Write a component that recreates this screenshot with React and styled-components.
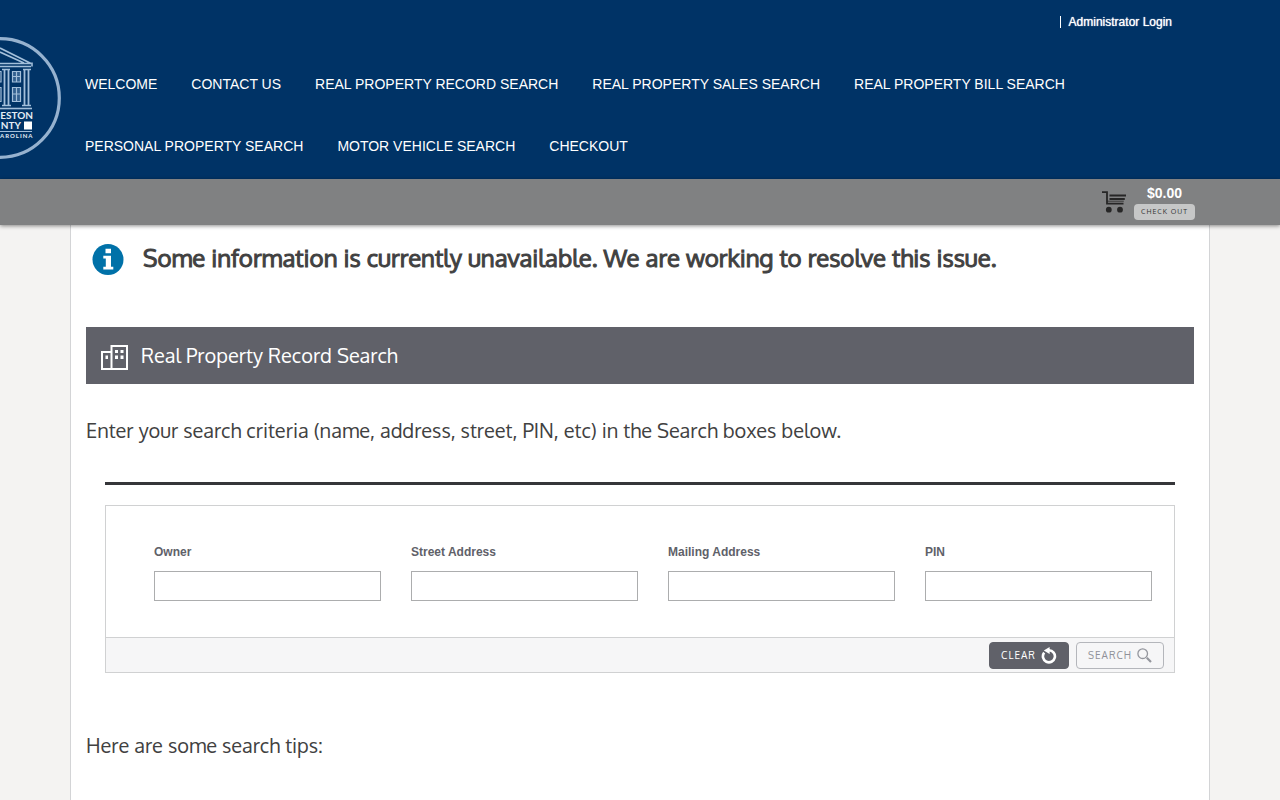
import React from "react";
import styled, { createGlobalStyle } from "styled-components";

const heading = `"Oxygen", "Noto Sans", sans-serif`;

const GlobalStyle = createGlobalStyle`
  *, *::before, *::after { box-sizing: border-box; }
  body {
    margin: 0;
    background: #f4f3f2;
    color: #414141;
    font-family: "Liberation Sans", Arial, sans-serif;
    font-size: 12px;
  }
  h1, h2, p { margin: 0; }
`;

const Shell = styled.div`
  display: flex;
  flex-direction: column;
  min-height: 100vh;
`;

const Header = styled.header`
  background: #003366;
  color: #fff;
  padding-bottom: 2px;
`;

const TopBar = styled.div`
  display: flex;
  justify-content: flex-end;
  height: 37px;
  padding: 16px 108px 0 0;
`;

const LoginLink = styled.a`
  height: 12px;
  padding-left: 8px;
  border-left: 1px solid #fff;
  color: #fff;
  font-size: 12px;
  line-height: 12px;
  text-decoration: none;
  text-shadow: 0 0 1px #fff;
`;

const HeaderRow = styled.div`
  display: flex;
  align-items: flex-start;
`;

const Logo = styled.svg`
  flex: none;
  display: block;
  width: 62px;
  height: 124px;
`;

const Nav = styled.nav`
  display: flex;
  flex-wrap: wrap;
  column-gap: 34px;
  flex: 1;
  padding: 16px 85px 0 23px;
`;

const NavLink = styled.a`
  color: #fff;
  font-size: 14px;
  line-height: 62px;
  text-decoration: none;
  white-space: nowrap;
`;

const CartBar = styled.div`
  position: relative;
  display: flex;
  justify-content: flex-end;
  align-items: center;
  gap: 8px;
  height: 46px;
  padding-right: 85px;
  background: #808182;
  box-shadow: 0 1px 4px rgba(0, 0, 0, 0.45);
`;

const CartInfo = styled.div`
  display: flex;
  flex-direction: column;
  align-items: center;
  gap: 3px;
`;

const Total = styled.strong`
  color: #fff;
  font-size: 14px;
  line-height: 16px;
`;

const CheckoutButton = styled.button`
  width: 61px;
  height: 16px;
  padding: 0;
  border: 0;
  border-radius: 4px;
  background: #c6c7c7;
  color: #333;
  font: 7px/16px ${heading};
  letter-spacing: 1px;
  white-space: nowrap;
`;

const Page = styled.main`
  flex: 1;
  margin: 0 70px;
  padding: 0 15px;
  background: #fff;
  border: solid #d3d4d6;
  border-width: 0 1px;
`;

const Notice = styled.div`
  display: flex;
  align-items: center;
  gap: 19px;
  height: 102px;
  padding: 0 6px 34px;
`;

const NoticeText = styled.h1`
  font: 400 24px/32px ${heading};
  -webkit-text-stroke: 1px currentColor;
  padding-bottom: 2px;
`;

const TitleBar = styled.div`
  display: flex;
  align-items: center;
  gap: 13px;
  height: 57px;
  padding: 0 15px;
  background: #606169;
  color: #fff;

  svg {
    margin-top: 3px;
  }
`;

const Title = styled.h2`
  padding-bottom: 2px;
  font: 400 20px/28px ${heading};
`;

const Lead = styled.p`
  margin-top: ${(p) => p.$space}px;
  font: 400 20px/30px ${heading};
`;

const SearchArea = styled.section`
  margin: 37px 19px 0;
  padding-top: 20px;
  border-top: 3px solid #353639;
`;

const SearchForm = styled.form`
  border: 1px solid #d0d1d2;
`;

const Fields = styled.div`
  display: grid;
  grid-template-columns: repeat(4, 1fr);
  gap: 30px;
  padding: 38px 22px 36px 48px;
`;

const Field = styled.label`
  display: flex;
  flex-direction: column;
  gap: 11px;
  color: #606169;
  font-size: 12px;
  font-weight: 700;
  line-height: 16px;
`;

const TextInput = styled.input`
  width: 100%;
  height: 30px;
  padding: 0 8px;
  border: 1px solid #acadae;
  border-radius: 0;
  background: #fff;
`;

const Actions = styled.div`
  display: flex;
  justify-content: flex-end;
  gap: 7px;
  padding: 4px 10px 3px;
  border-top: 1px solid #d0d1d2;
  background: #f6f6f7;
`;

const ActionButton = styled.button`
  display: flex;
  align-items: center;
  justify-content: center;
  gap: 5px;
  width: ${(p) => (p.$primary ? 80 : 88)}px;
  height: 27px;
  padding: 0 0 1px;
  border: 1px solid ${(p) => (p.$primary ? "#606169" : "#b4b6bb")};
  border-radius: 4px;
  background: ${(p) => (p.$primary ? "#606169" : "#f6f6f7")};
  color: ${(p) => (p.$primary ? "#fff" : "#8f9199")};
  font: 10px/16px ${heading};
  letter-spacing: 1px;
`;

const links = [
  "WELCOME",
  "CONTACT US",
  "REAL PROPERTY RECORD SEARCH",
  "REAL PROPERTY SALES SEARCH",
  "REAL PROPERTY BILL SEARCH",
  "PERSONAL PROPERTY SEARCH",
  "MOTOR VEHICLE SEARCH",
  "CHECKOUT",
];

const fields = ["Owner", "Street Address", "Mailing Address", "PIN"];

function CountyLogo() {
  return (
    <Logo viewBox="0 0 62 124" aria-label="County seal" role="img">
      <circle cx="0" cy="61" r="59.3" fill="none" stroke="#96b2cf" strokeWidth="3.2" />
      <path d="M12 34H21V45H12ZM12 50H21V65H12Z" fill="#33608f" />
      <g fill="none" stroke="#a3bfda">
        <path d="M0 11L31 26.5H0M0 15L24 26M0 29.5H31M32 25.5V29.5" strokeWidth="1.6" />
        <path d="M2 32.5H10M23 32.5H31" strokeWidth="1.4" />
        <path d="M4.5 33V68M8.5 33V68M24.5 33V68M28.5 33V68" strokeWidth="1.8" />
        <path d="M2 68.5H11M22 68.5H31" strokeWidth="1.4" />
        <path d="M12.5 34.5H20.5V45H12.5ZM16.5 34.5V45M12.5 39.5H20.5" strokeWidth="1.2" />
        <path d="M12.5 50.5H20.5V64.5H12.5ZM16.5 50.5V64.5M12.5 57H20.5" strokeWidth="1.2" />
        <path d="M0 34.5H1V45H0M0 50.5H1V64.5H0" strokeWidth="1.2" />
        <path d="M0 71.5H32" strokeWidth="1.6" />
        <path d="M0 94.5H32" strokeWidth="1" />
      </g>
      <g fill="#e4edf5" fontFamily="Lato, sans-serif">
        <text x="33" y="82" fontSize="10" fontWeight="700" textAnchor="end">ESTON</text>
        <text x="21" y="92" fontSize="10" fontWeight="700" textAnchor="end">NTY</text>
        <text x="0" y="101" fontSize="6" fontWeight="700" letterSpacing="1">AROLINA</text>
      </g>
      <path d="M24 84.5H32V92.5H24Z" fill="#fff" />
    </Logo>
  );
}

function CartIcon() {
  return (
    <svg width="24" height="22" viewBox="0 0 24 22" aria-hidden="true">
      <path d="M0 1.2H5V12.6H21.5M7.5 4.5H24M7.5 8H22.8" fill="none" stroke="#262626" strokeWidth="1.8" />
      <path d="M5 10.2H21.8" fill="none" stroke="#262626" strokeWidth="0.8" />
      <circle cx="6.8" cy="18.7" r="2.9" fill="#262626" />
      <circle cx="18" cy="18.7" r="2.9" fill="#262626" />
    </svg>
  );
}

function InfoIcon() {
  return (
    <svg width="32" height="32" viewBox="0 0 32 32" aria-hidden="true">
      <circle cx="16" cy="16.5" r="15.5" fill="#0071a8" />
      <path d="M13.5 5.8H19V10.3H13.5ZM11.3 12.8H19V23.8H21.3V26.5H11.3V23.8H13.8V15.5H11.3Z" fill="#fff" />
    </svg>
  );
}

function BuildingIcon() {
  return (
    <svg width="27" height="25" viewBox="0 0 27 25" aria-hidden="true">
      <path d="M10.5 7H1V24H26V1H10.5V24" fill="none" stroke="#fff" strokeWidth="2" />
      <path d="M14 5H17V8H14ZM19.5 5H22.5V8H19.5ZM14 10.5H17V14H14ZM19.5 10.5H22.5V14H19.5ZM4.5 10.5H7V14H4.5Z" fill="#fff" />
    </svg>
  );
}

function ResetIcon() {
  return (
    <svg width="16" height="17" viewBox="0 0 16 17" aria-hidden="true">
      <path d="M3.2 5.6A6 6 0 1 0 8 3.3" fill="none" stroke="#fff" strokeWidth="2.6" />
      <path d="M2.8 3.5L8.6 0V7Z" fill="#fff" />
    </svg>
  );
}

function SearchIcon() {
  return (
    <svg width="15" height="15" viewBox="0 0 15 15" aria-hidden="true">
      <circle cx="5.7" cy="5.7" r="4.8" fill="none" stroke="#94969d" strokeWidth="1.3" />
      <path d="M9.8 9.8L14 14" stroke="#94969d" strokeWidth="2.2" />
    </svg>
  );
}

export default function App() {
  return (
    <Shell>
      <GlobalStyle />
      <Header>
        <TopBar>
          <LoginLink href="#login">Administrator Login</LoginLink>
        </TopBar>
        <HeaderRow>
          <CountyLogo />
          <Nav>
            {links.map((label) => (
              <NavLink href="#nav" key={label}>{label}</NavLink>
            ))}
          </Nav>
        </HeaderRow>
      </Header>
      <CartBar>
        <CartIcon />
        <CartInfo>
          <Total>$0.00</Total>
          <CheckoutButton type="button">CHECK OUT</CheckoutButton>
        </CartInfo>
      </CartBar>
      <Page>
        <Notice>
          <InfoIcon />
          <NoticeText>
            Some information is currently unavailable. We are working to resolve this issue.
          </NoticeText>
        </Notice>
        <TitleBar>
          <BuildingIcon />
          <Title>Real Property Record Search</Title>
        </TitleBar>
        <Lead $space={31}>
          Enter your search criteria (name, address, street, PIN, etc) in the Search boxes below.
        </Lead>
        <SearchArea>
          <SearchForm onSubmit={(event) => event.preventDefault()}>
            <Fields>
              {fields.map((label) => (
                <Field key={label}>
                  {label}
                  <TextInput type="text" />
                </Field>
              ))}
            </Fields>
            <Actions>
              <ActionButton type="reset" $primary>CLEAR<ResetIcon /></ActionButton>
              <ActionButton type="submit">SEARCH<SearchIcon /></ActionButton>
            </Actions>
          </SearchForm>
        </SearchArea>
        <Lead $space={57}>Here are some search tips:</Lead>
      </Page>
    </Shell>
  );
}
